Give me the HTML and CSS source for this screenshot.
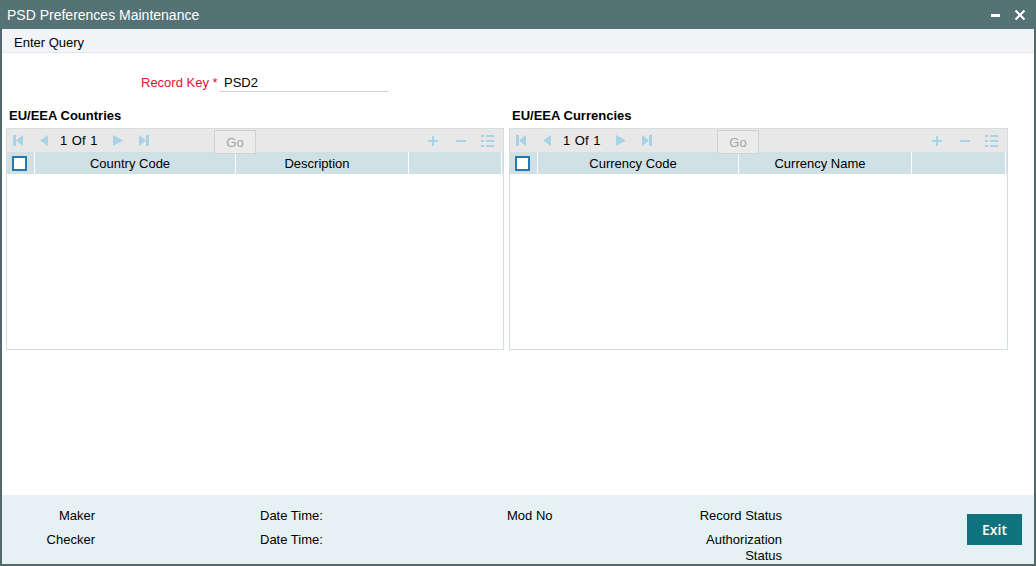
FILE: index.html
```html
<!DOCTYPE html>
<html>
<head>
<meta charset="utf-8">
<link rel="stylesheet" href="styles.css">
</head>
<body>
<div class="window">
  <div class="titlebar">
    <span class="title">PSD Preferences Maintenance</span>
    <div class="winctl">
      <svg class="ic-min" width="10" height="10" viewBox="0 0 10 10"><rect x="0" y="4" width="9" height="3" fill="#fff"/></svg>
      <svg class="ic-close" width="12" height="12" viewBox="0 0 12 12"><path d="M1.5 1.5 L10.5 10.5 M10.5 1.5 L1.5 10.5" stroke="#fff" stroke-width="2"/></svg>
    </div>
  </div>
  <div class="menubar"><span>Enter Query</span></div>
  <div class="content">
    <div class="keyrow">
      <label class="keylabel">Record Key <span class="req">*</span></label>
      <div class="keyinput">PSD2</div>
    </div>
    <div class="sections">
      <section class="sec">
        <h3 class="sec-title">EU/EEA Countries</h3>
        <div class="panel">
          <div class="ptool">
            <svg class="nav first" width="10" height="11" viewBox="0 0 10 11"><rect x="0" y="0" width="3" height="11" fill="#a8d2e5"/><path d="M10 0 L3 5.5 L10 11 Z" fill="#a8d2e5"/></svg>
            <svg class="nav prev" width="8" height="11" viewBox="0 0 8 11"><path d="M8 0 L0 5.5 L8 11 Z" fill="#a8d2e5"/></svg>
            <span class="pg">1 Of 1</span>
            <svg class="nav next" width="10" height="11" viewBox="0 0 10 11"><path d="M0 0 L10 5.5 L0 11 Z" fill="#a8d2e5"/></svg>
            <svg class="nav last" width="10" height="11" viewBox="0 0 10 11"><path d="M0 0 L7 5.5 L0 11 Z" fill="#a8d2e5"/><rect x="7" y="0" width="3" height="11" fill="#a8d2e5"/></svg>
            <button class="go">Go</button>
            <div class="spacer"></div>
            <svg class="act" width="12" height="12" viewBox="0 0 12 12"><path d="M6 1 V11 M1 6 H11" stroke="#a8d2e5" stroke-width="2"/></svg>
            <svg class="act" width="12" height="12" viewBox="0 0 12 12"><path d="M1 6 H11" stroke="#a8d2e5" stroke-width="2"/></svg>
            <svg class="act list" width="13" height="12" viewBox="0 0 13 12"><g fill="#a8d2e5"><rect x="0" y="0" width="3" height="2"/><rect x="5" y="0" width="8" height="2"/><rect x="0" y="5" width="3" height="2"/><rect x="5" y="5" width="8" height="2"/><rect x="0" y="10" width="3" height="2"/><rect x="5" y="10" width="8" height="2"/></g></svg>
          </div>
          <div class="phead">
            <div class="hc chk"><span class="box"></span></div>
            <div class="hc c1">Country Code</div>
            <div class="hc c2">Description</div>
            <div class="hc c3"></div>
          </div>
          <div class="pbody"></div>
        </div>
      </section>
      <section class="sec">
        <h3 class="sec-title">EU/EEA Currencies</h3>
        <div class="panel">
          <div class="ptool">
            <svg class="nav first" width="10" height="11" viewBox="0 0 10 11"><rect x="0" y="0" width="3" height="11" fill="#a8d2e5"/><path d="M10 0 L3 5.5 L10 11 Z" fill="#a8d2e5"/></svg>
            <svg class="nav prev" width="8" height="11" viewBox="0 0 8 11"><path d="M8 0 L0 5.5 L8 11 Z" fill="#a8d2e5"/></svg>
            <span class="pg">1 Of 1</span>
            <svg class="nav next" width="10" height="11" viewBox="0 0 10 11"><path d="M0 0 L10 5.5 L0 11 Z" fill="#a8d2e5"/></svg>
            <svg class="nav last" width="10" height="11" viewBox="0 0 10 11"><path d="M0 0 L7 5.5 L0 11 Z" fill="#a8d2e5"/><rect x="7" y="0" width="3" height="11" fill="#a8d2e5"/></svg>
            <button class="go">Go</button>
            <div class="spacer"></div>
            <svg class="act" width="12" height="12" viewBox="0 0 12 12"><path d="M6 1 V11 M1 6 H11" stroke="#a8d2e5" stroke-width="2"/></svg>
            <svg class="act" width="12" height="12" viewBox="0 0 12 12"><path d="M1 6 H11" stroke="#a8d2e5" stroke-width="2"/></svg>
            <svg class="act list" width="13" height="12" viewBox="0 0 13 12"><g fill="#a8d2e5"><rect x="0" y="0" width="3" height="2"/><rect x="5" y="0" width="8" height="2"/><rect x="0" y="5" width="3" height="2"/><rect x="5" y="5" width="8" height="2"/><rect x="0" y="10" width="3" height="2"/><rect x="5" y="10" width="8" height="2"/></g></svg>
          </div>
          <div class="phead">
            <div class="hc chk"><span class="box"></span></div>
            <div class="hc c1">Currency Code</div>
            <div class="hc c2">Currency Name</div>
            <div class="hc c3"></div>
          </div>
          <div class="pbody"></div>
        </div>
      </section>
    </div>
  </div>
  <div class="footer">
    <div class="fgrid">
      <div class="fl r">Maker</div>
      <div></div>
      <div class="fl">Date Time:</div>
      <div class="fl">Mod No</div>
      <div class="fl r">Record Status</div>
      <div class="fl r">Checker</div>
      <div></div>
      <div class="fl">Date Time:</div>
      <div></div>
      <div class="fl r">Authorization<br>Status</div>
    </div>
    <button class="exit">Exit</button>
  </div>
</div>
</body>
</html>
```

FILE: styles.css
```css
* { box-sizing: border-box; }
html, body { margin: 0; padding: 0; }
body {
  width: 1036px;
  height: 566px;
  font-family: "Liberation Sans", Arial, sans-serif;
  font-size: 13px;
  color: #000;
  background: #fff;
  overflow: hidden;
}
.window {
  width: 1036px;
  height: 566px;
  display: flex;
  flex-direction: column;
  border-left: 2px solid #52696c;
  border-right: 2px solid #52696c;
  border-bottom: 2px solid #52696c;
}
.titlebar {
  height: 29px;
  flex: none;
  background: #557275;
  display: flex;
  align-items: center;
  justify-content: space-between;
  margin: 0 -2px;
  padding: 0 10px 0 7px;
}
.title {
  color: #fff;
  font-size: 14px;
  line-height: 16px;
}
.winctl {
  display: flex;
  align-items: center;
  gap: 13px;
}
.menubar {
  height: 24px;
  flex: none;
  background: #f3f4f7;
  border-bottom: 1px solid #e3e5ea;
  display: flex;
  align-items: center;
  padding-left: 12px;
  padding-top: 4px;
}
.content {
  flex: 1;
  background: #fff;
  display: flex;
  flex-direction: column;
}
.keyrow {
  display: flex;
  align-items: flex-end;
  margin-top: 19px;
  padding-left: 139px;
  height: 20px;
}
.keylabel {
  color: #e3102f;
  font-size: 13px;
  line-height: 18px;
  width: 79px;
}
.req { color: #e3102f; }
.keyinput {
  width: 168px;
  height: 20px;
  line-height: 18px;
  padding-left: 4px;
  padding-top: 2px;
  border-bottom: 1px solid #cfd2d6;
}
.sections {
  display: grid;
  grid-template-columns: 498px 499px;
  column-gap: 5px;
  padding-left: 4px;
  margin-top: 16px;
}
.sec-title {
  margin: 0 0 4px 3px;
  font-size: 13px;
  font-weight: bold;
  line-height: 16px;
  height: 16px;
}
.panel {
  height: 222px;
  border: 1px solid #d3dde3;
  display: flex;
  flex-direction: column;
}
.ptool {
  height: 23px;
  flex: none;
  background: #e8e8e8;
  display: flex;
  align-items: center;
  padding-left: 6px;
  padding-right: 9px;
  position: relative;
}
.nav { flex: none; display: block; }
.nav.prev { margin-left: 17px; }
.pg { margin-left: 12px; font-size: 13px; line-height: 16px; width: 40px; word-spacing: 1px; }
.nav.next { margin-left: 13px; }
.nav.last { margin-left: 16px; }
.go {
  margin-left: 65px;
  width: 42px;
  height: 24px;
  align-self: flex-start;
  margin-top: 1px;
  background: #ebebeb;
  border: 1px solid #d1d1d1;
  color: #a3a3a3;
  font-family: "Liberation Sans", Arial, sans-serif;
  font-size: 13px;
  padding: 0;
  position: relative;
  z-index: 1;
}
.spacer { flex: 1; }
.act { display: block; flex: none; margin-left: 16px; }
.act.list { margin-left: 14px; }
.phead {
  height: 22px;
  flex: none;
  background: #d0e1e5;
  display: flex;
}
.hc {
  display: flex;
  align-items: center;
  justify-content: center;
  line-height: 16px;
  padding-top: 2px;
  border-right: 1px solid #fff;
}
.hc.chk { width: 28px; justify-content: flex-start; padding-left: 5px; padding-top: 0; }
.hc.c1 { width: 201px; padding-right: 10px; }
.hc.c2 { width: 173px; padding-right: 10px; }
.hc.c3 { flex: 1; margin-right: 1px; }
.box {
  width: 15px;
  height: 15px;
  background: #fff;
  border: 2px solid #2778ae;
  display: block;
}
.pbody { flex: 1; background: #fff; }
.footer {
  height: 69px;
  flex: none;
  background: #e6f1f4;
  display: flex;
  align-items: flex-start;
  position: relative;
}
.fgrid {
  display: grid;
  grid-template-columns: 93px 165px 247px 150px 125px;
  grid-template-rows: 24px auto;
  padding-top: 13px;
}
.fl { line-height: 16px; font-size: 13px; white-space: nowrap; }
.fl.r { text-align: right; }
.exit {
  margin-left: auto;
  margin-right: 12px;
  margin-top: 19px;
  width: 55px;
  height: 31px;
  background: #0f737e;
  border: none;
  color: #fff;
  font-family: "Open Sans", "Liberation Sans", sans-serif;
  font-size: 14px;
  font-weight: 600;
  padding: 0;
}
```
